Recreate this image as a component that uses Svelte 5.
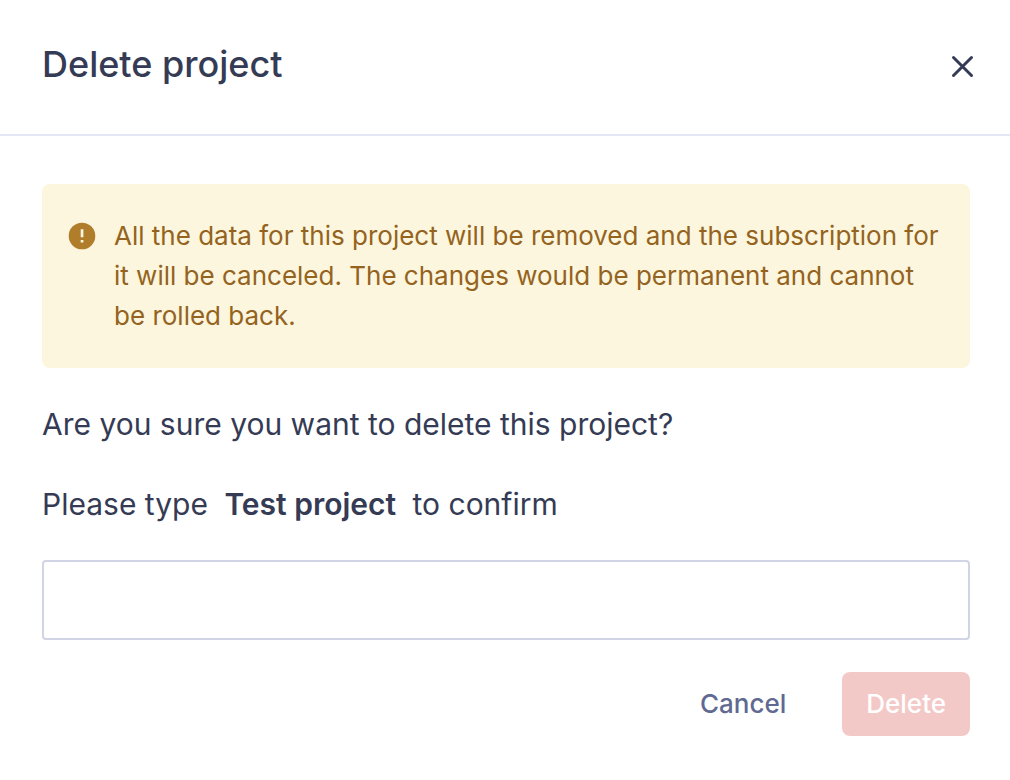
<script lang="ts">
	let { projectName = 'Test project' } = $props();

	let confirmation = $state('');
	let canDelete = $derived(confirmation === projectName);
</script>

<div class="modal" role="dialog" aria-labelledby="modal-title">
	<header class="modal-header">
		<h1 id="modal-title">Delete project</h1>
		<button type="button" class="close" aria-label="Close">
			<svg width="28" height="28" viewBox="0 0 28 28" fill="none" stroke="currentColor" stroke-width="3" stroke-linecap="round">
				<path d="M5.5 7.5 23.5 25.5M23.5 7.5 5.5 25.5" />
			</svg>
		</button>
	</header>

	<form class="modal-body">
		<div class="warning">
			<svg width="28" height="28" viewBox="0 0 28 28" aria-hidden="true">
				<circle cx="14" cy="14" r="13.3" fill="#b07d2b" />
				<path d="M12.7 7.2h2.7v8h-2.7zM12.7 17.9h2.7v2.7h-2.7z" fill="#fcf6de" />
			</svg>
			<p>
				All the data for this project will be removed and the subscription for it will be canceled.
				The changes would be permanent and cannot be rolled back.
			</p>
		</div>

		<p class="question">Are you sure you want to delete this project?</p>
		<label for="confirmation">Please type <strong>{projectName}</strong> to confirm</label>
		<input id="confirmation" type="text" autocomplete="off" bind:value={confirmation} />

		<div class="actions">
			<button type="button" class="btn cancel">Cancel</button>
			<button type="submit" class="btn delete" disabled={!canDelete}>Delete</button>
		</div>
	</form>
</div>

<style>
	:global(body) {
		background: #fff;
	}

	.modal {
		color: #353b54;
		font-family: Inter, sans-serif;
	}

	.modal-header {
		display: flex;
		align-items: center;
		justify-content: space-between;
		padding: 40px 34px 46px 42px;
		border-bottom: 2px solid #e5e8f4;
	}

	h1 {
		margin: 0;
		font-size: 36px;
		font-weight: 500;
		line-height: 48px;
	}

	button {
		border: 0;
		background: none;
		font-family: inherit;
		cursor: pointer;
	}

	.close {
		display: flex;
		padding: 0;
		color: #353b54;
	}

	.modal-body {
		padding: 48px 40px 44px 42px;
	}

	.warning {
		display: flex;
		align-items: flex-start;
		gap: 18px;
		padding: 32px 26px;
		border-radius: 8px;
		background: #fcf6de;
		color: #946320;
	}

	.warning svg {
		flex: none;
		margin-top: 6px;
	}

	.warning p {
		margin: 0;
		font-size: 26px;
		line-height: 40px;
	}

	.question {
		margin: 32px 0;
	}

	.question,
	label {
		display: block;
		font-size: 30px;
		line-height: 48px;
	}

	label strong {
		margin: 0 8px;
		font-weight: 600;
	}

	input {
		display: block;
		box-sizing: border-box;
		width: 100%;
		height: 80px;
		margin: 32px 0;
		padding: 0 24px;
		border: 2px solid #d1d4e4;
		border-radius: 4px;
		color: inherit;
		font-family: inherit;
		font-size: 28px;
	}

	.actions {
		display: flex;
		justify-content: flex-end;
		gap: 32px;
	}

	.btn {
		padding: 12px 24px;
		border-radius: 8px;
		font-size: 26px;
		font-weight: 500;
		line-height: 40px;
	}

	.cancel {
		color: #606991;
	}

	.delete {
		background: #e5484d;
		color: #fff;
	}

	.delete:disabled {
		background: #f3c9c8;
		cursor: default;
	}
</style>
